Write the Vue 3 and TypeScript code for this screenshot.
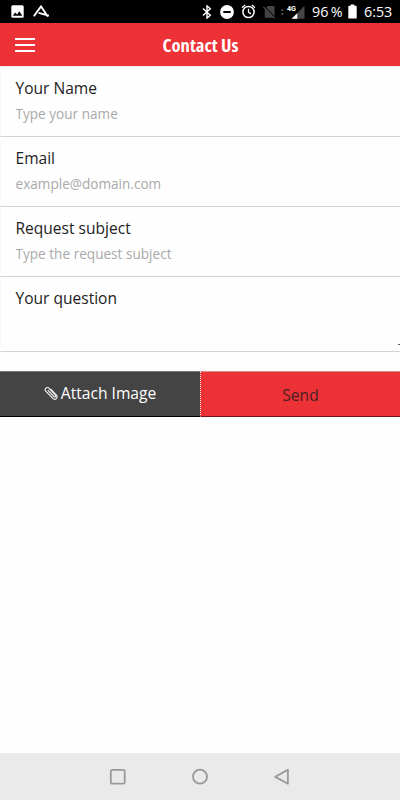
<script setup lang="ts">
import { ref } from 'vue'

interface Field {
  id: string
  label: string
  placeholder: string
  type: string
}

const fields: Field[] = [
  { id: 'name', label: 'Your Name', placeholder: 'Type your name', type: 'text' },
  { id: 'email', label: 'Email', placeholder: 'example@domain.com', type: 'email' },
  { id: 'subject', label: 'Request subject', placeholder: 'Type the request subject', type: 'text' },
]
const values = ref<Record<string, string>>({ name: '', email: '', subject: '' })
const question = ref('')
</script>

<template>
  <div class="screen">
    <div class="status">
      <div class="group left">
        <svg width="13" height="13" viewBox="0 0 13 13">
          <rect x="0.3" y="0.3" width="12.4" height="12.4" rx="1.5" fill="#fff" />
          <path d="M1.8 10.8 4.2 7.4 6 9.5 8.3 6.3 11.3 10.8Z" fill="#000" />
        </svg>
        <svg class="a-logo" width="17" height="13" viewBox="0 0 17 13">
          <path d="M0.8 11.2 8 1.4 13.3 9.2M5.6 7.9 14 10.2" fill="none" stroke="#fff" stroke-width="1.9" />
          <circle cx="14.6" cy="10.6" r="1.4" fill="#fff" />
        </svg>
      </div>
      <div class="group right">
        <svg class="bt" width="10" height="14" viewBox="0 0 10 14">
          <path d="M1 3.6 8.3 10.2 5 13.1V0.9L8.3 3.8 1 10.4" fill="none" stroke="#fff" stroke-width="1.4" />
        </svg>
        <svg class="dnd" width="14" height="14" viewBox="0 0 14 14">
          <circle cx="7" cy="7" r="6.9" fill="#fff" />
          <rect x="3.3" y="6" width="7.4" height="2" fill="#000" />
        </svg>
        <svg class="alarm" width="15" height="15" viewBox="0 0 15 15">
          <circle cx="7.5" cy="8" r="5.6" fill="none" stroke="#fff" stroke-width="1.5" />
          <path d="M7.5 4.8V8.2L10 9.9M1 3.8 4.1 1.1M14 3.8 10.9 1.1" fill="none" stroke="#fff" stroke-width="1.3" />
        </svg>
        <svg class="nosim" width="13" height="14" viewBox="0 0 13 14">
          <path d="M4.8 1H11.5V12.7H1.8V4Z" fill="#444" />
          <path d="M0.6 1.5 12.3 13.3" stroke="#000" stroke-width="2" />
          <path d="M0.4 1.9 11.8 13.4" stroke="#555" stroke-width="1.1" />
        </svg>
        <svg class="signal" width="26" height="16" viewBox="0 0 26 16">
          <path d="M0.7 6.7 2.2 4.8 3.7 6.7ZM0.7 9.3H3.7L2.2 11.2Z" fill="#666" />
          <path d="M24.5 1.8V14.8H11.5Z" fill="#444" />
          <path d="M17.3 9.2V14.8H11.5Z" fill="#fff" />
          <path d="M5 0H16.5V8.5H5Z" fill="#000" />
          <text x="7" y="7.2" font-family="Roboto, sans-serif" font-weight="700" font-size="8" textLength="9" lengthAdjust="spacingAndGlyphs" fill="#fff">4G</text>
        </svg>
        <span class="percent">96 %</span>
        <svg class="battery" width="9" height="15" viewBox="0 0 9 15">
          <path d="M2.7 0.4H6.3V1.8H7.8Q8.7 1.8 8.7 2.7V13.7Q8.7 14.6 7.8 14.6H1.2Q0.3 14.6 0.3 13.7V2.7Q0.3 1.8 1.2 1.8H2.7Z" fill="#fff" />
        </svg>
        <span class="clock">6:53</span>
      </div>
    </div>

    <header class="header">
      <button class="menu" aria-label="Menu"><i></i><i></i><i></i></button>
      <h1>Contact Us</h1>
    </header>

    <form class="form" @submit.prevent>
      <div v-for="f in fields" :key="f.id" class="row">
        <label :for="f.id">{{ f.label }}</label>
        <input :id="f.id" v-model="values[f.id]" :type="f.type" :placeholder="f.placeholder" />
      </div>
      <div class="row question">
        <label for="question">Your question</label>
        <textarea id="question" v-model="question"></textarea>
        <span class="grip"></span>
      </div>
      <div class="actions">
        <button type="button" class="attach">
          <svg width="14" height="15" viewBox="0 0 14 15">
            <path d="M4.3 4.7 9.8 10.5Q10.8 11.4 11.5 10.6T11.3 8.8L5.1 2.3Q3.4 0.8 1.9 2.1T1.8 5.2L8.7 12.4Q10.7 14.2 12.3 12.6T12.4 9L7 3.4" fill="none" stroke="#f4f4f4" stroke-width="1.15" stroke-linecap="round" />
          </svg>
          <span>Attach Image</span>
        </button>
        <button type="submit" class="send">Send</button>
      </div>
    </form>

    <nav class="nav">
      <svg width="18" height="18" viewBox="0 0 18 18"><rect x="1.8" y="1.8" width="13.9" height="13.9" rx="1.8" /></svg>
      <svg width="18" height="18" viewBox="0 0 18 18"><circle cx="9" cy="8.7" r="7" /></svg>
      <svg width="18" height="18" viewBox="0 0 18 18"><path d="M2.2 8.9 14.9 1.8V15.8Z" stroke-linejoin="round" /></svg>
    </nav>
  </div>
</template>

<style>
body {
  background: #fefefe;
}
</style>

<style scoped>
.screen {
  display: flex;
  flex-direction: column;
  height: 800px;
  overflow: hidden;
  background: #fefefe;
  font-family: 'Open Sans', sans-serif;
  color: #222;
}
.status {
  display: flex;
  justify-content: space-between;
  height: 23px;
  box-sizing: border-box;
  background: #000;
  color: #fff;
  flex: none;
}
.group {
  display: flex;
  align-items: center;
}
.left {
  padding-left: 11px;
}
.a-logo {
  margin-left: 9px;
}
.right {
  padding-right: 8px;
  font: 14.3px/23px 'Open Sans', sans-serif;
}
.bt {
  margin-right: 8px;
}
.dnd {
  margin-right: 7px;
}
.alarm {
  margin-right: 7px;
}
.nosim {
  margin-right: 4px;
}
.signal {
  margin-right: 6px;
}
.percent {
  width: 31px;
  margin-right: 5px;
  white-space: nowrap;
  word-spacing: -1.2px;
}
.battery {
  margin-right: 7px;
}
.clock {
  width: 28px;
  white-space: nowrap;
}
.header {
  display: grid;
  grid-template-columns: 60px 1fr 60px;
  align-items: center;
  height: 43px;
  flex: none;
  background: #ed3237;
}
button {
  border: 0;
  padding: 0;
  margin: 0;
  font: inherit;
}
.menu {
  display: flex;
  flex-direction: column;
  gap: 4px;
  width: 20px;
  margin-left: 15px;
  background: none;
}
.menu i {
  height: 2px;
  background: #fff;
}
h1 {
  margin: 0;
  padding: 1px 0 0 1px;
  text-align: center;
  font: 700 18.6px/42px 'Open Sans', sans-serif;
  font-stretch: 75%;
  color: #fff;
}
.row {
  display: flex;
  flex-direction: column;
  height: 70px;
  box-sizing: border-box;
  padding: 10px 14.5px 0;
  border-bottom: 1px solid #d3d3d3;
  border-left: 1px solid #f8f8f8;
}
.row:first-child {
  height: 71px;
  border-top: 1px solid #fbe4e4;
}
label {
  font-size: 15.55px;
  line-height: 22px;
}
input {
  height: 20px;
  margin-top: 5px;
  padding: 0;
  border: 0;
  outline: 0;
  background: transparent;
  font: 13.6px/20px 'Open Sans', sans-serif;
}
input::placeholder {
  color: #a9a9a9;
}
.question {
  position: relative;
  height: 75px;
}
textarea {
  height: 36px;
  padding: 0;
  border: 0;
  resize: none;
  outline: 0;
  background: transparent;
}
.grip {
  position: absolute;
  right: 0;
  bottom: 6px;
  width: 2px;
  height: 1px;
  background: #555;
}
.actions {
  display: grid;
  grid-template-columns: 200px 200px;
  height: 46px;
  margin-top: 19px;
}
.attach,
.send {
  box-sizing: border-box;
  font-size: 15.6px;
}
.attach {
  display: flex;
  align-items: center;
  justify-content: center;
  gap: 3px;
  padding-bottom: 2px;
  background: #444;
  color: #fff;
  border-top: 1px solid #777;
  border-bottom: 1px solid #000;
}
.send {
  padding-top: 2px;
  background: #ed3237;
  color: #4a2023;
  border-top: 1px solid #d98b8d;
  border-left: 1px dotted #eee;
  border-bottom: 1px solid #6e1420;
}
.nav {
  display: flex;
  justify-content: center;
  align-items: center;
  gap: 64px;
  height: 47px;
  margin-top: auto;
  background: #eaeaea;
}
.nav svg {
  fill: none;
  stroke: #999;
  stroke-width: 1.8;
}
</style>
